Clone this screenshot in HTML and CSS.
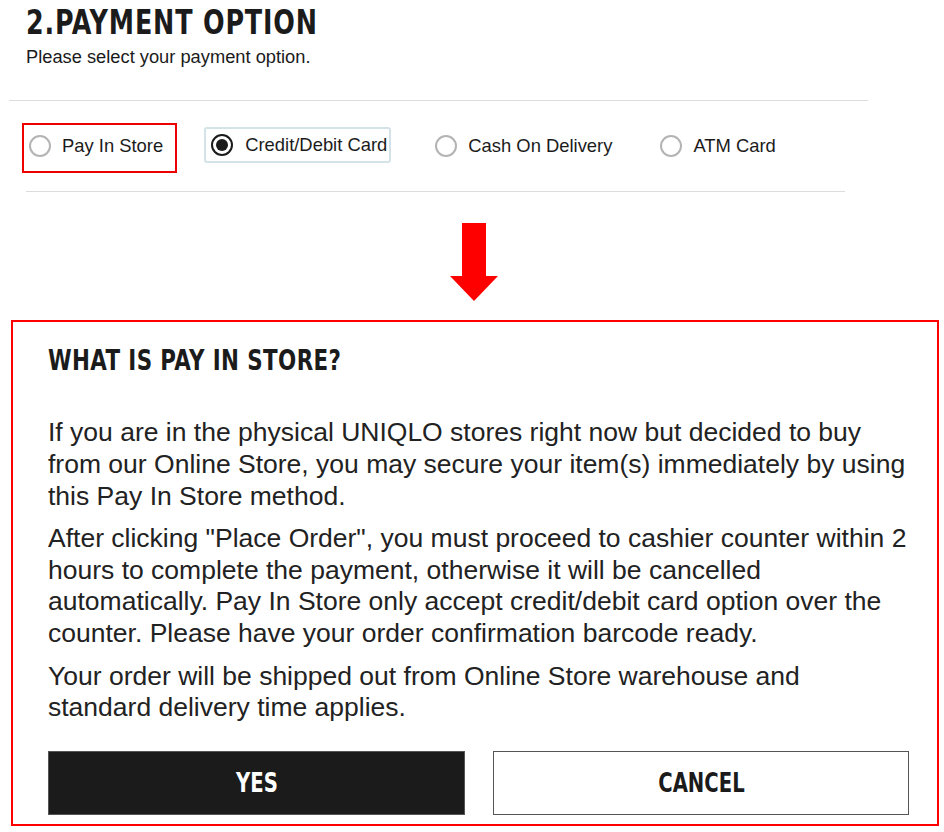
FILE: index.html
```html
<!DOCTYPE html>
<html>
<head>
    <title>Payment Option</title>
    <link rel="stylesheet" href="styles.css">
</head>
<body>
    <div class="page">
        <div class="header">
            <h2 class="title"><span class="narrow">2.PAYMENT OPTION</span></h2>
            <p class="subtitle">Please select your payment option.</p>
        </div>
        <div class="options-wrap">
            <div class="options">
                <label class="option highlight">
                    <span class="radio"></span>
                    <span class="option-text">Pay In Store</span>
                </label>
                <label class="option selected">
                    <span class="radio checked"></span>
                    <span class="option-text">Credit/Debit Card</span>
                </label>
                <label class="option">
                    <span class="radio"></span>
                    <span class="option-text">Cash On Delivery</span>
                </label>
                <label class="option">
                    <span class="radio"></span>
                    <span class="option-text">ATM Card</span>
                </label>
            </div>
        </div>

        <div class="arrow-row">
            <svg class="arrow" width="48" height="78" viewBox="0 0 48 78">
                <polygon points="12,0 36,0 36,53 48,53 24,78 0,53 12,53" fill="#ff0000"/>
            </svg>
        </div>

        <div class="modal">
            <h3 class="modal-title"><span class="narrow">WHAT IS PAY IN STORE?</span></h3>
            <p>If you are in the physical UNIQLO stores right now but decided to buy from our Online Store, you may secure your item(s) immediately by using this Pay In Store method.</p>
            <p>After clicking "Place Order", you must proceed to cashier counter within 2 hours to complete the payment, otherwise it will be cancelled automatically. Pay In Store only accept credit/debit card option over the counter. Please have your order confirmation barcode ready.</p>
            <p>Your order will be shipped out from Online Store warehouse and standard delivery time applies.</p>
            <div class="buttons">
                <button class="btn btn-yes"><span class="btn-label">YES</span></button>
                <button class="btn btn-cancel"><span class="btn-label">CANCEL</span></button>
            </div>
        </div>
    </div>
</body>
</html>
```

FILE: styles.css
```css
body {
    margin: 0;
    background: #fff;
    color: #1b1b1b;
    font-family: "Liberation Sans", Arial, sans-serif;
}
.page {
    width: 944px;
}
.narrow {
    display: inline-block;
    transform-origin: left center;
}
.header {
    padding-left: 26px;
}
.title {
    margin: 0;
    padding-top: 4px;
    font-family: "DejaVu Sans Condensed", sans-serif;
    font-weight: bold;
    font-size: 34px;
    line-height: 36px;
    letter-spacing: 1px;
    color: #1b1b1b;
}
.title .narrow {
    transform: scaleX(0.83);
}
.subtitle {
    margin: 6px 0 0;
    font-size: 18.3px;
    line-height: 22px;
    color: #1b1b1b;
}
.options-wrap {
    margin: 32px 0 0 9px;
    width: 859px;
    border-top: 1px solid #dcdcdc;
}
.options {
    display: flex;
    align-items: flex-start;
    margin: 22px 0 0 17px;
    width: 819px;
    height: 68px;
    border-bottom: 1px solid #dcdcdc;
}
.option {
    display: flex;
    align-items: center;
    gap: 11px;
    height: 42px;
    padding: 0 12px 4px 5px;
    border: 2px solid transparent;
    font-size: 18.4px;
    color: #1b1b1b;
    margin-right: 27px;
}
.option.highlight {
    margin-left: -4px;
    border-color: #ee0000;
}
.option.selected {
    height: 32px;
    margin-top: 4px;
    margin-right: 37px;
    padding: 0 2px 0 5px;
    gap: 12px;
    border-color: #d3e3e7;
    border-radius: 3px;
}
.radio {
    box-sizing: border-box;
    width: 22px;
    height: 22px;
    border: 2px solid #b4b4b4;
    border-radius: 50%;
    display: flex;
    align-items: center;
    justify-content: center;
}
.radio.checked {
    border-color: #1b1b1b;
}
.radio.checked::after {
    content: "";
    width: 12px;
    height: 12px;
    border-radius: 50%;
    background: #1b1b1b;
}
.arrow-row {
    display: flex;
    padding-left: 450px;
    margin-top: 31px;
}
.modal {
    margin: 19px 0 0 11px;
    width: 928px;
    height: 506px;
    box-sizing: border-box;
    border: 2px solid #ff0000;
    padding: 22px 27px 0 35px;
}
.modal-title {
    margin: 0 0 41px;
    font-family: "DejaVu Sans Condensed", sans-serif;
    font-weight: bold;
    font-size: 29px;
    line-height: 32px;
    letter-spacing: 0.5px;
    color: #1b1b1b;
}
.modal-title .narrow {
    transform: scaleX(0.82);
}
.modal p {
    margin: 0 0 10.5px;
    font-size: 26.5px;
    line-height: 31.8px;
    color: #222;
}
.buttons {
    display: flex;
    gap: 28px;
    margin-top: 27px;
}
.btn {
    height: 64px;
    padding: 0;
    font-family: "DejaVu Sans Condensed", sans-serif;
    font-weight: bold;
    font-size: 26px;
    cursor: pointer;
}
.btn-label {
    display: inline-block;
    transform: scaleX(0.84);
}
.btn-yes {
    width: 417px;
    background: #1b1b1b;
    color: #fff;
    border: 1px solid #555;
}
.btn-cancel {
    width: 416px;
    background: #fff;
    color: #1b1b1b;
    border: 1px solid #555;
}
```
